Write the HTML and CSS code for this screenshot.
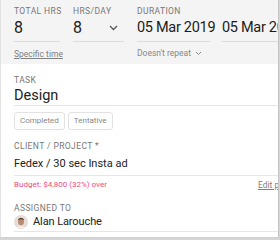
FILE: index.html
```html
<!DOCTYPE html>
<html lang="en">
<head>
    <meta charset="UTF-8">
    <title>Edit allocation</title>
    <link rel="stylesheet" href="styles.css">
</head>
<body>
    <div class="modal">
        <div class="inner">
            <div class="top">
                <div class="field total">
                    <div class="label">Total hrs</div>
                    <div class="value">8</div>
                    <a class="link">Specific time</a>
                </div>
                <div class="field perday">
                    <div class="label">Hrs/day</div>
                    <div class="value">8 <span class="chev"><svg width="9" height="6" viewBox="0 0 9 6"><path d="M1 1l3.5 3.5L8 1" fill="none" stroke="#555" stroke-width="1.3"/></svg></span></div>
                </div>
                <div class="field duration">
                    <div class="label">Duration</div>
                    <div class="dates">
                        <div class="value date">05 Mar 2019</div>
                        <div class="value date">05 Mar 2019</div>
                    </div>
                    <div class="repeat">Doesn't repeat <svg width="7" height="5" viewBox="0 0 7 5"><path d="M1 1l2.5 2.5L6 1" fill="none" stroke="#888" stroke-width="1"/></svg></div>
                </div>
            </div>

            <div class="body">
                <div class="label">Task</div>
                <div class="big line">Design</div>
                <div class="tags">
                    <span class="tag">Completed</span>
                    <span class="tag">Tentative</span>
                </div>

                <div class="label mt">Client / Project *</div>
                <div class="mid line">Fedex / 30 sec Insta ad</div>
                <div class="budget-row">
                    <span class="budget">Budget: $4,800 (32%) over</span>
                    <a class="link">Edit project</a>
                </div>

                <div class="label mt2">Assigned to</div>
                <div class="person line">
                    <span class="avatar"><svg width="14" height="14" viewBox="0 0 14 14"><circle cx="7" cy="7" r="7" fill="#e4ddd8"/><ellipse cx="7" cy="6.5" rx="3" ry="3.8" fill="#b98a70"/><path d="M4 5c0-2.5 6-2.5 6 0c-1-1-5-1-6 0z" fill="#3a2a22"/><path d="M2.5 13c1-2.5 8-2.5 9 0z" fill="#f3f0ee"/></svg></span>
                    Alan Larouche
                </div>
            </div>
        </div>
    </div>
</body>
</html>
```

FILE: styles.css
```css
* {
    margin: 0;
    padding: 0;
    box-sizing: border-box;
}

body {
    background-color: #d6d6d6;
    font-family: 'Roboto', sans-serif;
    color: #222;
    width: 280px;
    height: 240px;
    overflow: hidden;
}

.modal {
    width: 279px;
    height: 238px;
    background-color: #fff;
    border-left: 1px solid #e2e2e2;
    border-right: 1px solid #c4c4c4;
    border-bottom: 1px solid #cfcfcf;
    overflow: hidden;
}

.inner {
    width: 420px;
}

.label {
    font-size: 8.5px;
    letter-spacing: 0.4px;
    text-transform: uppercase;
    color: #777;
    line-height: 10px;
    white-space: nowrap;
}

.top {
    background-color: #f4f4f4;
    height: 64px;
    display: flex;
    padding: 6px 0 0 13px;
}

.value {
    font-size: 16px;
    line-height: 20px;
    color: #1c1c1c;
    margin-top: 2px;
    padding-bottom: 3px;
    border-bottom: 1px solid #dcdcdc;
}

.total {
    width: 46px;
    margin-right: 13px;
}

.perday {
    width: 51px;
    margin-right: 13px;
}

.perday .value {
    display: flex;
    justify-content: space-between;
    align-items: center;
}

.chev {
    display: flex;
    margin-right: 6px;
}

.dates {
    display: flex;
    gap: 12px;
}

.date {
    width: 73px;
    font-size: 14.5px;
    letter-spacing: -0.3px;
    white-space: nowrap;
}

.link {
    display: inline-block;
    font-size: 8.5px;
    color: #808080;
    text-decoration: underline;
    margin-top: 6px;
    white-space: nowrap;
}

.repeat {
    font-size: 8.5px;
    color: #888;
    margin-top: 6px;
    display: flex;
    align-items: center;
    gap: 4px;
}

.body {
    padding: 11px 0 0 13px;
}

.big {
    font-size: 14.5px;
    line-height: 19px;
    margin-top: 1px;
}

.line {
    border-bottom: 1px solid #e6e6e6;
}

.tags {
    display: flex;
    gap: 3px;
    margin-top: 6px;
}

.tag {
    font-size: 8px;
    line-height: 10px;
    color: #888;
    border: 1px solid #e2e2e2;
    border-radius: 3px;
    padding: 3px 5px;
}

.mt {
    margin-top: 11px;
}

.mid {
    font-size: 11px;
    line-height: 16px;
    margin-top: 5px;
    padding-bottom: 3px;
}

.budget-row {
    display: flex;
    align-items: center;
}

.budget {
    width: 244px;
    font-size: 8px;
    line-height: 10px;
    color: #ec4c7f;
    margin-top: 4px;
}

.budget-row .link {
    margin-top: 4px;
    line-height: 10px;
}

.mt2 {
    margin-top: 13px;
}

.person {
    display: flex;
    align-items: center;
    gap: 5px;
    font-size: 11px;
    letter-spacing: -0.1px;
    line-height: 16px;
    margin-top: 1px;
    padding-bottom: 1px;
}

.avatar {
    display: flex;
}
```
